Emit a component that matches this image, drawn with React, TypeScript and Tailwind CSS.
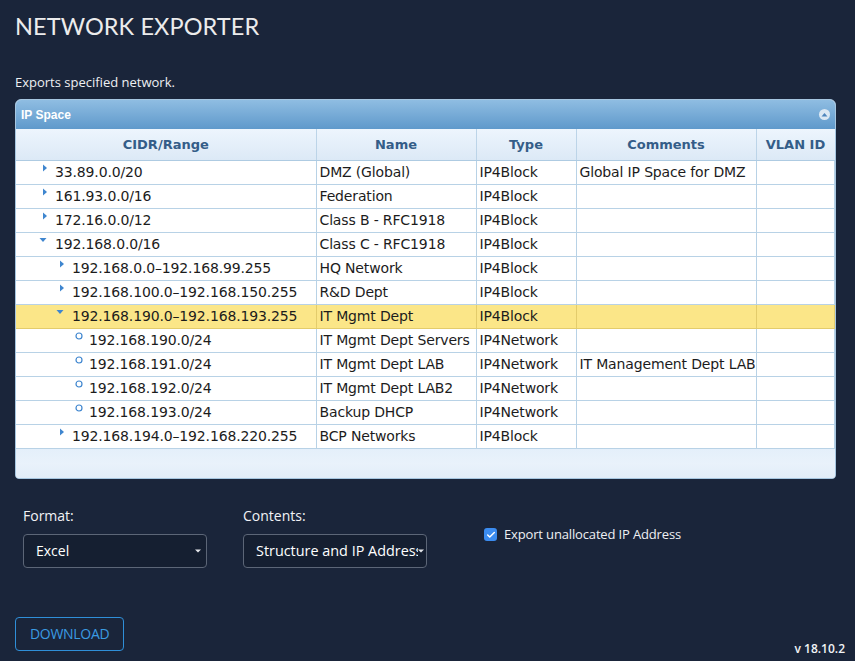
import { Check } from "lucide-react";

type Row = {
  cidr: string;
  level: number;
  icon: "right" | "down" | "leaf";
  name: string;
  type: string;
  comments?: string;
  selected?: boolean;
};

const rows: Row[] = [
  { cidr: "33.89.0.0/20", level: 0, icon: "right", name: "DMZ (Global)", type: "IP4Block", comments: "Global IP Space for DMZ" },
  { cidr: "161.93.0.0/16", level: 0, icon: "right", name: "Federation", type: "IP4Block" },
  { cidr: "172.16.0.0/12", level: 0, icon: "right", name: "Class B - RFC1918", type: "IP4Block" },
  { cidr: "192.168.0.0/16", level: 0, icon: "down", name: "Class C - RFC1918", type: "IP4Block" },
  { cidr: "192.168.0.0–192.168.99.255", level: 1, icon: "right", name: "HQ Network", type: "IP4Block" },
  { cidr: "192.168.100.0–192.168.150.255", level: 1, icon: "right", name: "R&D Dept", type: "IP4Block" },
  { cidr: "192.168.190.0–192.168.193.255", level: 1, icon: "down", name: "IT Mgmt Dept", type: "IP4Block", selected: true },
  { cidr: "192.168.190.0/24", level: 2, icon: "leaf", name: "IT Mgmt Dept Servers", type: "IP4Network" },
  { cidr: "192.168.191.0/24", level: 2, icon: "leaf", name: "IT Mgmt Dept LAB", type: "IP4Network", comments: "IT Management Dept LAB" },
  { cidr: "192.168.192.0/24", level: 2, icon: "leaf", name: "IT Mgmt Dept LAB2", type: "IP4Network" },
  { cidr: "192.168.193.0/24", level: 2, icon: "leaf", name: "Backup DHCP", type: "IP4Network" },
  { cidr: "192.168.194.0–192.168.220.255", level: 1, icon: "right", name: "BCP Networks", type: "IP4Block" },
];

const indent = ["pl-[24px]", "pl-[41px]", "pl-[58px]"];

function TreeIcon({ kind }: { kind: Row["icon"] }) {
  if (kind === "right")
    return (
      <svg width="10" height="10" viewBox="0 0 10 10" className="-mt-[9px]">
        <path d="M3 1.5 L7 5 L3 8.5 Z" fill="#3f86cf" />
      </svg>
    );
  if (kind === "down")
    return (
      <svg width="10" height="10" viewBox="0 0 10 10" className="-mt-[9px] -ml-[5px]">
        <path d="M1.5 3 L8.5 3 L5 7 Z" fill="#3f86cf" />
      </svg>
    );
  return (
    <svg width="10" height="10" viewBox="0 0 10 10" className="-mt-[8px]">
      <circle cx="5" cy="5" r="3" fill="none" stroke="#3f86cf" strokeWidth="1.2" />
    </svg>
  );
}

export default function App() {
  return (
    <div className="min-h-screen w-full bg-[#1a253a] font-['Open_Sans',sans-serif] text-white">
      <div className="px-[15px] pt-[10px]">
        {/* Title */}
        <h1 className="font-['Lato',sans-serif] text-[23.5px] font-normal leading-[32px] tracking-[0.1px] text-[#ececec]">
          NETWORK EXPORTER
        </h1>
        <p className="mt-[31px] text-[13px] leading-[18px] text-[#eef0f3]">Exports specified network.</p>

        {/* IP Space panel */}
        <div className="mt-[8px] w-[821px] overflow-hidden rounded-t-[6px] rounded-b-[4px] border border-[#a6c6e0] bg-[#e6f0fa]">
          <div className="flex h-[29px] items-center justify-between bg-gradient-to-b from-[#8fbde2] to-[#5f99cb] pl-[5px] pr-[5px]">
            <span className="font-['Liberation_Sans',sans-serif] text-[12px] font-bold text-white">IP Space</span>
            <span className="flex h-[11px] w-[11px] items-center justify-center rounded-full bg-[#dbe8f4]">
              <svg width="7" height="5" viewBox="0 0 7 5">
                <path d="M0.5 4.5 L3.5 1 L6.5 4.5 Z" fill="#4f86bd" />
              </svg>
            </span>
          </div>

          <table className="w-full table-fixed border-collapse font-['DejaVu_Sans',sans-serif] text-[14px] tracking-[-0.15px] text-[#1c1c1c]">
            <colgroup>
              <col className="w-[300px]" />
              <col className="w-[160px]" />
              <col className="w-[100px]" />
              <col className="w-[180px]" />
              <col />
            </colgroup>
            <thead>
              <tr className="h-[31px] bg-gradient-to-b from-[#edf5fd] to-[#dce9f6] text-[13px] font-bold tracking-normal text-[#345d88]">
                {["CIDR/Range", "Name", "Type", "Comments", "VLAN ID"].map((h, i) => (
                  <th
                    key={h}
                    className={`border-b border-[#aecbe2] text-center ${i > 0 ? "border-l border-l-[#bcd4e8]" : ""}`}
                  >
                    {h}
                  </th>
                ))}
              </tr>
            </thead>
            <tbody>
              {rows.map((r) => {
                const cell = r.selected
                  ? "border-l border-[#e3cc6c]"
                  : "border-l border-[#b8d2e6]";
                return (
                  <tr
                    key={r.cidr}
                    className={`h-[24px] border-b ${
                      r.selected ? "border-[#e3cc6c] bg-[#fbe688]" : "border-[#b8d2e6] bg-white"
                    }`}
                  >
                    <td className={`${indent[r.level]} whitespace-nowrap`}>
                      <div className="flex items-center">
                        <span className="mr-[5px] flex w-[10px] justify-center">
                          <TreeIcon kind={r.icon} />
                        </span>
                        <span>{r.cidr}</span>
                      </div>
                    </td>
                    <td className={`${cell} whitespace-nowrap pl-[3px]`}>{r.name}</td>
                    <td className={`${cell} whitespace-nowrap pl-[3px]`}>{r.type}</td>
                    <td className={`${cell} whitespace-nowrap pl-[3px]`}>{r.comments ?? ""}</td>
                    <td className={`${cell} border-r`}></td>
                  </tr>
                );
              })}
            </tbody>
          </table>

          <div className="h-[29px] bg-gradient-to-b from-[#e4effa] via-[#e9f2fb] to-[#e2edf8]" />
        </div>

        {/* Options */}
        <div className="mt-[27px] flex pl-[8px]">
          <div className="w-[184px]">
            <div className="text-[14px] leading-[20px] text-[#f1f3f6]">Format:</div>
            <div className="mt-[8px] flex h-[34px] items-center justify-between rounded-[4px] border border-[#5c6677] bg-[#151f31] pl-[12px] pr-[5px] text-[14px]">
              <span>Excel</span>
              <svg width="6" height="4" viewBox="0 0 6 4">
                <path d="M0 0.5 L6 0.5 L3 3.5 Z" fill="#e5e7eb" />
              </svg>
            </div>
          </div>

          <div className="ml-[36px] w-[184px]">
            <div className="text-[14px] leading-[20px] text-[#f1f3f6]">Contents:</div>
            <div className="mt-[8px] flex h-[34px] items-center rounded-[4px] border border-[#5c6677] bg-[#151f31] pl-[12px] pr-[2px] text-[14px]">
              <span className="w-[163px] overflow-hidden whitespace-nowrap text-[14.4px]">Structure and IP Address</span>
              <svg width="6" height="4" viewBox="0 0 6 4" className="shrink-0">
                <path d="M0 0.5 L6 0.5 L3 3.5 Z" fill="#e5e7eb" />
              </svg>
            </div>
          </div>

          <label className="ml-[57px] mt-[21px] flex h-[16px] items-center gap-[7px] self-start text-[13px] tracking-[-0.15px] text-[#eef0f3]">
            <span className="flex h-[13px] w-[13px] items-center justify-center rounded-[3px] bg-[#3b8cf0]">
              <Check size={10} strokeWidth={3.5} color="white" />
            </span>
            Export unallocated IP Address
          </label>
        </div>

        <div className="-mr-[5px] mt-[49px] flex items-end justify-between">
          <button className="h-[34px] rounded-[4px] border border-[#2f8fd8] px-[14px] text-[14px] tracking-[-0.3px] text-[#3a9be2]">
            DOWNLOAD
          </button>
          <span className="-mb-[7px] text-[12px] font-semibold text-[#f1f3f6]">v 18.10.2</span>
        </div>
      </div>
    </div>
  );
}
